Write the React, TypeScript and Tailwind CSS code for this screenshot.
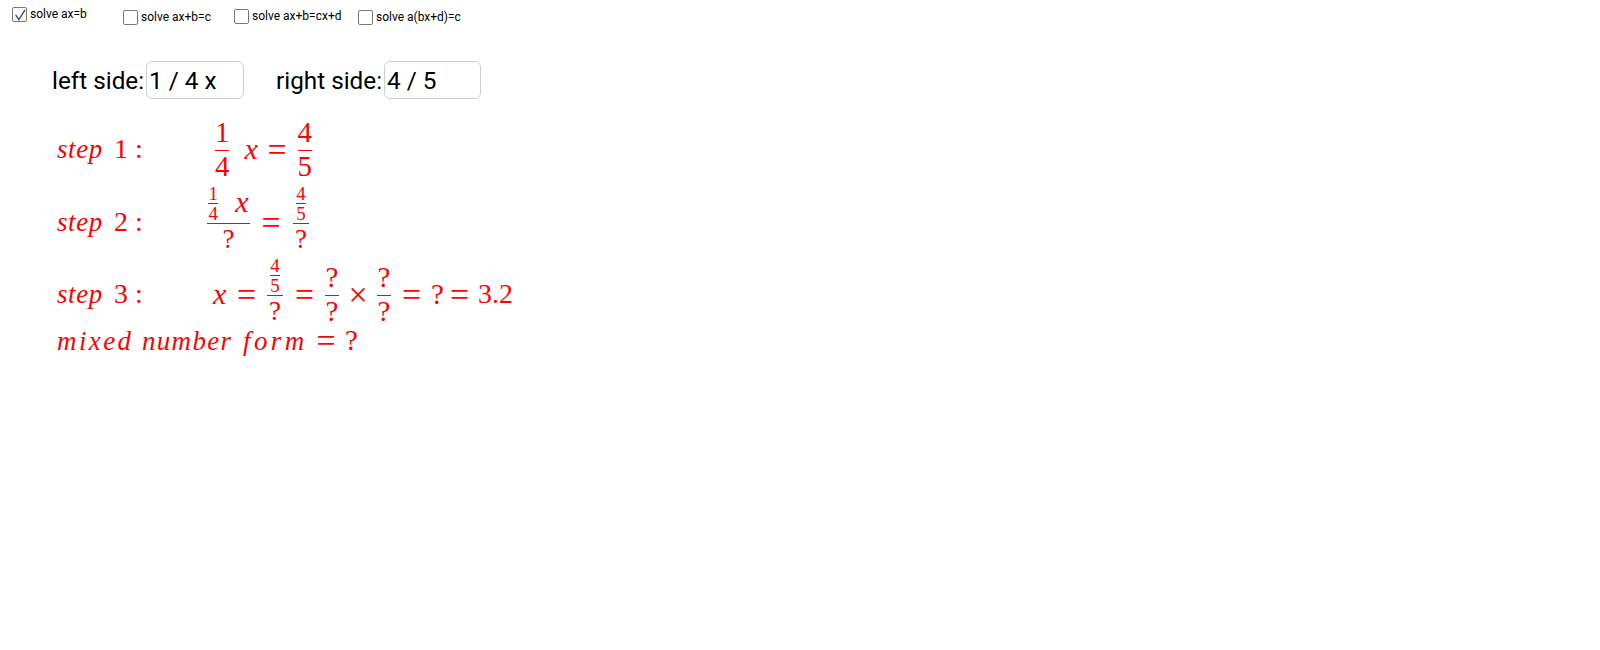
import React from "react";

const Check = ({ checked, label, cls }: { checked?: boolean; label: string; cls: string }) => (
  <div className={`flex items-start gap-[3px] ${cls}`}>
    <div className="flex h-[15px] w-[15px] items-center justify-center rounded-[2px] border-[1.5px] border-[#777777] bg-white">
      {checked && (
        <svg width="12" height="12" viewBox="0 0 12 12" fill="none">
          <path d="M1.6 5.8 L4.9 10.6 L11 0.8" stroke="#555" strokeWidth="1.5" />
        </svg>
      )}
    </div>
    <span className="text-[12px] leading-[14px] text-black">{label}</span>
  </div>
);

const Frac = ({ n, d, w, size, up = "pb-[3px]", down = "pt-[1px]" }: { n: React.ReactNode; d: React.ReactNode; w: number; size: string; up?: string; down?: string }) => (
  <span className={`inline-grid grid-rows-[1fr_auto_1fr] justify-items-center ${size}`}>
    <span className={`flex items-end justify-center leading-none ${up}`}>{n}</span>
    <span className="h-px bg-[#ff0000]" style={{ width: w }} />
    <span className={`flex items-start justify-center leading-none ${down}`}>{d}</span>
  </span>
);

const Small = () => <Frac n="4" d="5" w={10} size="text-[19px]" up="pb-0" down="pt-0" />;

const Op = ({ children, cls }: { children: React.ReactNode; cls: string }) => (
  <span className={`flex justify-center text-[34px] leading-none ${cls}`}>{children}</span>
);

const Label = ({ n }: { n: number }) => (
  <span className="flex w-[151px] shrink-0 items-baseline pb-[3px] pl-px">
    <i className="w-[57px] text-[27px] tracking-[0.6px]">step</i>
    <span className="w-[21px] text-[28px]">{n}</span>
    <span className="text-[28px]">:</span>
  </span>
);

export default function App() {
  return (
    <div className="h-[650px] w-[1600px] overflow-hidden bg-white font-['Roboto',sans-serif]">
      <div className="flex h-[61px] items-start">
        <Check checked label="solve ax=b" cls="ml-[12px] mt-[7px] w-[111px]" />
        <Check label="solve ax+b=c" cls="mt-[10px] w-[111px]" />
        <Check label="solve ax+b=cx+d" cls="mt-[9px] w-[124px]" />
        <Check label="solve a(bx+d)=c" cls="mt-[10px]" />
      </div>

      <div className="flex h-[38px] items-center text-[24.3px] text-black">
        <span className="ml-[52px] w-[94px] pt-[3px]">left side:</span>
        <div className="flex h-[38px] w-[98px] items-center rounded-[6px] border-[1.5px] border-[#cfcfcf] pl-[2px] pt-[3px]">1 / 4 x</div>
        <span className="ml-[32px] w-[108px] pt-[3px]">right side:</span>
        <div className="flex h-[38px] w-[97px] items-center rounded-[6px] border-[1.5px] border-[#cfcfcf] pl-[2px] pt-[3px]">4 / 5</div>
      </div>

      <div className="pl-[56px] font-['Liberation_Serif',serif] text-[#ff0000]">
        <div className="mt-[22px] flex h-[58px] items-center">
          <Label n={1} />
          <span className="ml-[8px] flex items-center">
            <Frac n="1" d="4" w={14} size="text-[29px]" />
            <i className="ml-[15px] w-[13px] pb-[2px] text-[30px] leading-none">x</i>
            <Op cls="ml-[10px] mr-[11px] w-[19px]">=</Op>
            <Frac n="4" d="5" w={14} size="text-[29px]" />
          </span>
        </div>

        <div className="mt-[11px] flex h-[66px] items-center">
          <Label n={2} />
          <span className="flex items-center">
            <Frac
              w={43}
              size="text-[27px]"
              up="pb-0"
              down="pt-[2px]"
              n={
                <span className="flex items-center">
                  <Frac n="1" d="4" w={10} size="text-[19px]" up="pb-0" down="pt-0" />
                  <i className="ml-[17px] pb-[2px] text-[30px] leading-none">x</i>
                </span>
              }
              d="?"
            />
            <Op cls="ml-[12px] mr-[13px] w-[18px]">=</Op>
            <Frac w={16} size="text-[27px]" up="pb-0" down="pt-[2px]" n={<Small />} d="?" />
          </span>
        </div>

        <div className="mt-[6px] flex h-[66px] items-center">
          <Label n={3} />
          <span className="ml-[6px] flex items-center">
            <i className="w-[13px] pb-[2px] text-[30px] leading-none">x</i>
            <Op cls="mx-[11px] w-[19px]">=</Op>
            <Frac w={16} size="text-[27px]" up="pb-0" down="pt-[2px]" n={<Small />} d="?" />
            <Op cls="ml-[12px] mr-[11px] w-[19px]">=</Op>
            <Frac n="?" d="?" w={14} size="text-[29px]" />
            <Op cls="ml-[12px] mr-[12px] w-[14px]">×</Op>
            <Frac n="?" d="?" w={14} size="text-[29px]" />
            <Op cls="ml-[11px] mr-[10px] w-[19px]">=</Op>
            <span className="w-[9px] pb-[2px] text-[29px] leading-none">?</span>
            <Op cls="ml-[10px] mr-[9px] w-[19px]">=</Op>
            <span className="pb-[2px] text-[28px] leading-none">3.2</span>
          </span>
        </div>

        <div className="flex h-[26px] items-center text-[27px]">
          <i className="w-[86px] pl-px tracking-[2.4px]">mixed</i>
          <i className="w-[101px] tracking-[1.3px]">number</i>
          <i className="w-[74px] tracking-[3.4px]">form</i>
          <Op cls="mr-[10px] w-[18px]">=</Op>
          <span className="text-[29px]">?</span>
        </div>
      </div>
    </div>
  );
}
